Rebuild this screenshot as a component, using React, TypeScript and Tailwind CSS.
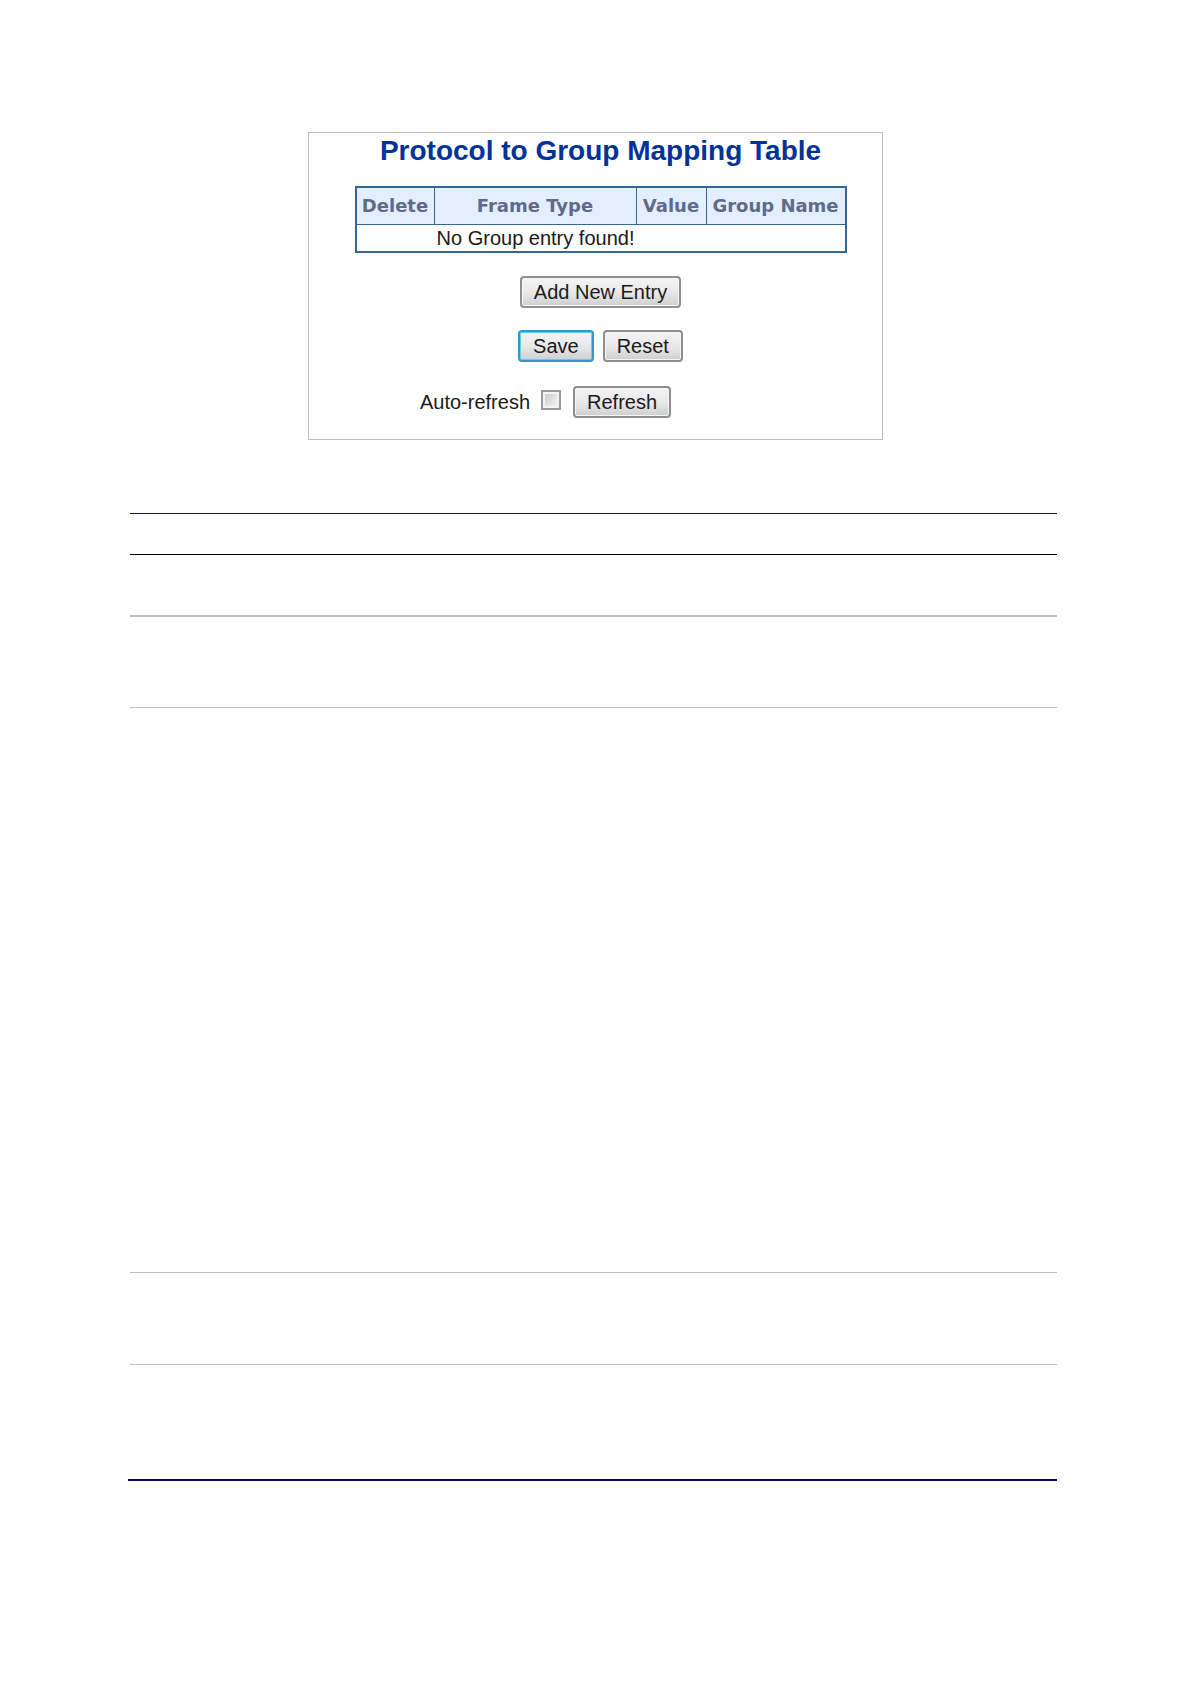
import React from "react";

const buttonBase =
  "flex h-8 items-center justify-center rounded-[4px] border-2 bg-linear-to-b from-[#f4f4f4] from-0% via-[#e9e9e9] via-50% to-[#cfcfcf] text-[20px] leading-6 text-[#1a1a1a]";

function FormButton({ label, primary = false }: { label: string; primary?: boolean }) {
  return (
    <button
      type="button"
      className={`${buttonBase} ${
        primary
          ? "border-[#3a94c4] px-[13px] shadow-[inset_0_0_0_1px_#5fd0f5]"
          : "border-[#8f8f8f] px-3 shadow-[inset_0_0_0_1px_#f6f6f6]"
      }`}
    >
      {label}
    </button>
  );
}

function MappingTable() {
  const head = "border-b border-[#336699] bg-[#e3efff] p-0 text-center font-bold";
  return (
    <table className="w-[492px] table-fixed border-separate border-spacing-0 border-2 border-[#336699]">
      <colgroup>
        <col className="w-[78px]" />
        <col className="w-[202px]" />
        <col className="w-[70px]" />
        <col className="w-[138px]" />
      </colgroup>
      <thead className="font-['DejaVu_Sans',sans-serif] text-[18px] leading-9 text-[#5f6b88]">
        <tr>
          <th scope="col" className={`${head} border-r`}>Delete</th>
          <th scope="col" className={`${head} border-r`}>Frame Type</th>
          <th scope="col" className={`${head} border-r`}>Value</th>
          <th scope="col" className={head}>Group Name</th>
        </tr>
      </thead>
      <tbody className="text-[20px] leading-[26px] text-[#1a1a1a]">
        <tr>
          <td className="p-0" />
          <td className="p-0 text-center whitespace-nowrap">No Group entry found!</td>
          <td className="p-0" colSpan={2} />
        </tr>
      </tbody>
    </table>
  );
}

export default function App() {
  return (
    <main className="min-h-screen bg-white pt-[132px] pb-12 font-['Liberation_Sans',Arial,sans-serif]">
      <section className="mx-auto flex w-[575px] max-w-full flex-col items-center border border-[#bfbfbf] pb-[21px] pl-[10px]">
        <h1 className="text-[28px] leading-9 font-bold text-[#003399]">
          Protocol to Group Mapping Table
        </h1>
        <div className="mt-[17px]">
          <MappingTable />
        </div>
        <div className="mt-[23px]">
          <FormButton label="Add New Entry" />
        </div>
        <div className="mt-[22px] flex gap-[9px]">
          <FormButton label="Save" primary />
          <FormButton label="Reset" />
        </div>
        <div className="mt-6 flex items-center pr-[110px]">
          <label htmlFor="auto-refresh" className="text-[20px] leading-6 text-[#1a1a1a]">
            Auto-refresh
          </label>
          <input
            id="auto-refresh"
            type="checkbox"
            className="mr-3 mb-1 ml-[11px] size-5 appearance-none border-2 border-[#9a9a9a] bg-linear-to-br from-[#c4c8cc] to-[#f7f7f7] shadow-[inset_0_0_0_2px_#f4f4f4] checked:from-[#336699]"
          />
          <FormButton label="Refresh" />
        </div>
      </section>

      <section className="mt-[73px] mr-[134px] ml-32 border-b-2 border-[#12005e]">
        <div className="ml-0.5">
          <div className="h-[41px] border-t border-[#1a0a5e]" />
          <div className="h-[61px] border-t border-black" />
          <div className="h-[92px] border-t-2 border-[#bfbfbf]" />
          <div className="h-[565px] border-t border-[#bfbfbf]" />
          <div className="h-[92px] border-t border-[#bfbfbf]" />
          <div className="h-[115px] border-t border-[#bfbfbf]" />
        </div>
      </section>
    </main>
  );
}
